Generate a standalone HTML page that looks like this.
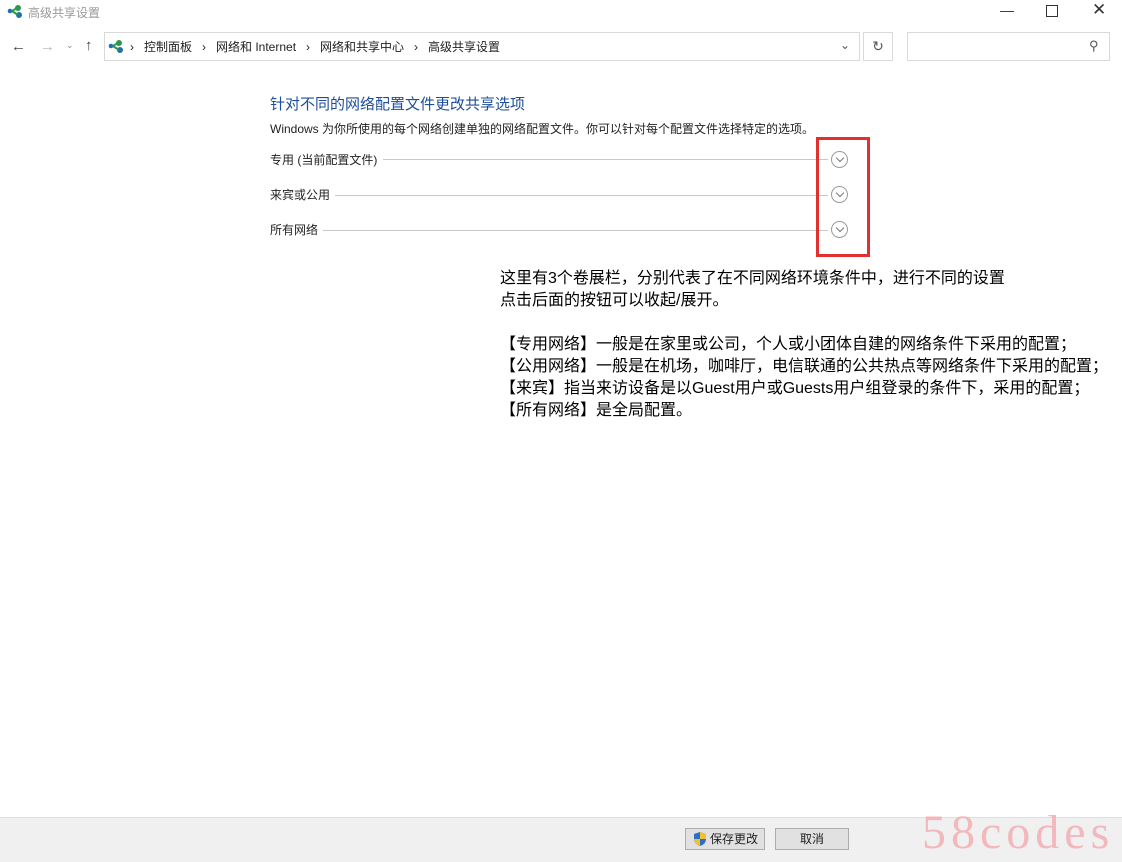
<!DOCTYPE html>
<html><head><meta charset="utf-8"><style>
body{margin:0;width:1122px;height:861px;position:relative;background:#fff;font-family:"Liberation Sans","Noto Sans CJK SC",sans-serif;overflow:hidden}
.a{position:absolute;white-space:nowrap}
.s{font-size:12px;color:#222}
.line{position:absolute;height:1px;background:#c8c8c8}
.circ{position:absolute;width:17px;height:17px;border:1px solid #9a9a9a;border-radius:50%;box-sizing:border-box}
.circ:after{content:"";position:absolute;left:5px;top:3px;width:5px;height:5px;border-right:1px solid #777;border-bottom:1px solid #777;transform:rotate(45deg)}
.big{font-size:16px;color:#000;line-height:22px}
</style></head><body>
<svg class="a" style="left:7px;top:4px" width="16" height="14"><circle cx="3" cy="7" r="2.3" fill="#1f6fb8"/><circle cx="11" cy="4" r="3" fill="#2a9a4a"/><circle cx="12" cy="11" r="3" fill="#1f6fb8"/><path d="M5 7 L10 4 M5 7 L11 11" stroke="#2a9a4a" stroke-width="2"/></svg>
<div class="a" style="left:28px;top:4px;font-size:12px;color:#999">高级共享设置</div>
<div class="a" style="left:1000px;top:2px;font-size:14px;color:#333">—</div>
<div class="a" style="left:1046px;top:5px;width:10px;height:10px;border:1px solid #333"></div>
<div class="a" style="left:1092px;top:0px;font-size:17px;color:#333">✕</div>
<div class="a" style="left:11px;top:38px;font-size:15px;color:#444">←</div>
<div class="a" style="left:40px;top:38px;font-size:15px;color:#bbb">→</div>
<div class="a" style="left:66px;top:40px;font-size:9px;color:#888">⌄</div>
<div class="a" style="left:85px;top:37px;font-size:15px;color:#444">↑</div>
<div class="a" style="left:104px;top:32px;width:756px;height:29px;border:1px solid #d9d9d9;box-sizing:border-box"></div>
<div class="a" style="left:863px;top:32px;width:30px;height:29px;border:1px solid #d9d9d9;box-sizing:border-box;text-align:center;font-size:14px;line-height:27px;color:#555">↻</div>
<div class="a" style="left:907px;top:32px;width:203px;height:29px;border:1px solid #d9d9d9;box-sizing:border-box"></div>
<div class="a" style="left:1089px;top:38px;font-size:13px;color:#555">⚲</div>
<svg class="a" style="left:108px;top:39px" width="16" height="14"><circle cx="3" cy="7" r="2.3" fill="#1f6fb8"/><circle cx="11" cy="4" r="3" fill="#2a9a4a"/><circle cx="12" cy="11" r="3" fill="#1f6fb8"/><path d="M5 7 L10 4 M5 7 L11 11" stroke="#2a9a4a" stroke-width="2"/></svg>
<div class="a s" style="left:130px;top:38px">›&nbsp;&nbsp;&nbsp;控制面板&nbsp;&nbsp;&nbsp;›&nbsp;&nbsp;&nbsp;网络和 Internet&nbsp;&nbsp;&nbsp;›&nbsp;&nbsp;&nbsp;网络和共享中心&nbsp;&nbsp;&nbsp;›&nbsp;&nbsp;&nbsp;高级共享设置</div>
<div class="a" style="left:840px;top:38px;font-size:12px;color:#555">⌄</div>
<div class="a" style="left:270px;top:93px;font-size:15px;color:#1e4e9a">针对不同的网络配置文件更改共享选项</div>
<div class="a s" style="left:270px;top:120px">Windows 为你所使用的每个网络创建单独的网络配置文件。你可以针对每个配置文件选择特定的选项。</div>
<div class="a s" style="left:270px;top:151px">专用 (当前配置文件)</div><div class="line" style="left:383px;top:159px;width:445px"></div>
<div class="a s" style="left:270px;top:186px">来宾或公用</div><div class="line" style="left:335px;top:195px;width:493px"></div>
<div class="a s" style="left:270px;top:221px">所有网络</div><div class="line" style="left:323px;top:230px;width:505px"></div>
<div class="circ" style="left:831px;top:151px"></div>
<div class="circ" style="left:831px;top:186px"></div>
<div class="circ" style="left:831px;top:221px"></div>
<div class="a" style="left:816px;top:137px;width:54px;height:120px;border:3px solid #e03030;box-sizing:border-box"></div>
<div class="a big" style="left:500px;top:268px">这里有3个卷展栏，分别代表了在不同网络环境条件中，进行不同的设置<br>点击后面的按钮可以收起/展开。<br><br>【专用网络】一般是在家里或公司，个人或小团体自建的网络条件下采用的配置；<br>【公用网络】一般是在机场，咖啡厅，电信联通的公共热点等网络条件下采用的配置；<br>【来宾】指当来访设备是以Guest用户或Guests用户组登录的条件下，采用的配置；<br>【所有网络】是全局配置。</div>
<div class="a" style="left:0;top:817px;width:1122px;height:44px;background:#f0f0f0;border-top:1px solid #dfdfdf"></div>
<div class="a s" style="left:685px;top:828px;width:80px;height:22px;border:1px solid #adadad;background:#e1e1e1;box-sizing:border-box;line-height:20px;padding-left:24px">保存更改</div>
<svg class="a" style="left:693px;top:831px" width="14" height="16"><path d="M7 1 L13 3 L13 8 Q13 13 7 15 Q1 13 1 8 L1 3Z" fill="#2a6fc9"/><path d="M7 1 L13 3 L13 8 L7 8Z M1 8 L7 8 L7 15 Q1 13 1 8Z" fill="#f2c12e"/></svg>
<div class="a s" style="left:775px;top:828px;width:74px;height:22px;border:1px solid #adadad;background:#e1e1e1;box-sizing:border-box;line-height:20px;text-align:center">取消</div>
<div class="a" style="left:922px;top:805px;font-family:'Liberation Serif',serif;font-size:48px;color:#f2b8bc;letter-spacing:5px">58codes</div>
</body></html>
